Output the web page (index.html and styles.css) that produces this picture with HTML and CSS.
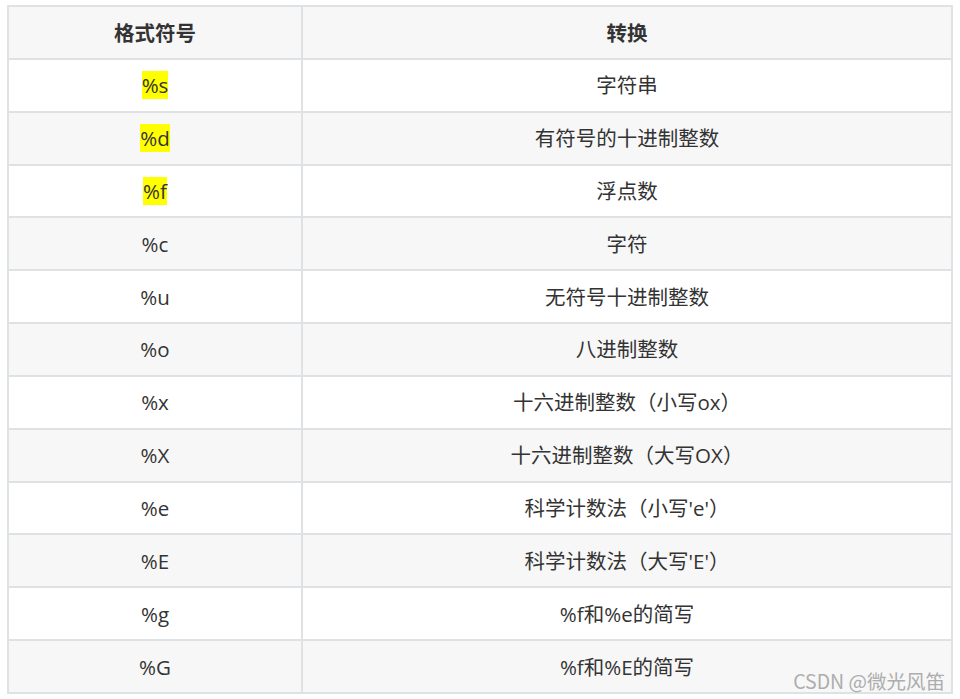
FILE: index.html
```html
<!DOCTYPE html>
<html lang="zh-CN">
<head>
<meta charset="utf-8">
<title>格式符号</title>
<link rel="stylesheet" href="styles.css">
</head>
<body>
<table class="fmt-table">
  <thead>
    <tr><th class="col-sym">格式符号</th><th class="col-conv">转换</th></tr>
  </thead>
  <tbody>
    <tr><td><mark class="hl">%s</mark></td><td>字符串</td></tr>
    <tr><td><mark class="hl">%d</mark></td><td>有符号的十进制整数</td></tr>
    <tr><td><mark class="hl">%f</mark></td><td>浮点数</td></tr>
    <tr><td>%c</td><td>字符</td></tr>
    <tr><td>%u</td><td>无符号十进制整数</td></tr>
    <tr><td>%o</td><td>八进制整数</td></tr>
    <tr><td>%x</td><td>十六进制整数（小写ox）</td></tr>
    <tr><td>%X</td><td>十六进制整数（大写OX）</td></tr>
    <tr><td>%e</td><td>科学计数法（小写'e'）</td></tr>
    <tr><td>%E</td><td>科学计数法（大写'E'）</td></tr>
    <tr><td>%g</td><td>%f和%e的简写</td></tr>
    <tr><td>%G</td><td>%f和%E的简写</td></tr>
  </tbody>
</table>
<div class="watermark">CSDN @微光风笛</div>
</body>
</html>
```
FILE: styles.css
```css
html, body {
  margin: 0;
  padding: 0;
  background: #ffffff;
}
body {
  position: relative;
  width: 960px;
  height: 699px;
  overflow: hidden;
  padding: 5px 0 0 7px;
  box-sizing: border-box;
  font-family: "Open Sans", "Noto Sans CJK SC", sans-serif;
  color: #333333;
}
.fmt-table {
  border-collapse: separate;
  border-spacing: 0;
  border: 2px solid #dfe2e5;
  width: 946px;
  table-layout: fixed;
  font-size: 20.5px;
}
.col-sym { width: 292px; }
.fmt-table th,
.fmt-table td {
  height: 50.85px;
  padding: 0;
  text-align: center;
  vertical-align: middle;
  border-bottom: 2px solid #dfe2e5;
  line-height: 28px;
}
.fmt-table th:first-child,
.fmt-table td:first-child {
  border-right: 2px solid #dfe2e5;
}
.fmt-table tbody tr:last-child td {
  border-bottom: 0;
}
.fmt-table th {
  background: #f7f7f7;
  font-weight: bold;
  font-family: "Noto Sans CJK SC", sans-serif;
}
.fmt-table tbody tr:nth-child(even) td {
  background: #f7f7f7;
}
.hl {
  background: #ffff00;
  color: #333333;
  padding: 0;
}
.watermark {
  position: absolute;
  right: 15px;
  bottom: 7px;
  font-family: "Noto Sans CJK SC", sans-serif;
  font-size: 19.5px;
  color: #adadad;
  line-height: 22px;
}
```
